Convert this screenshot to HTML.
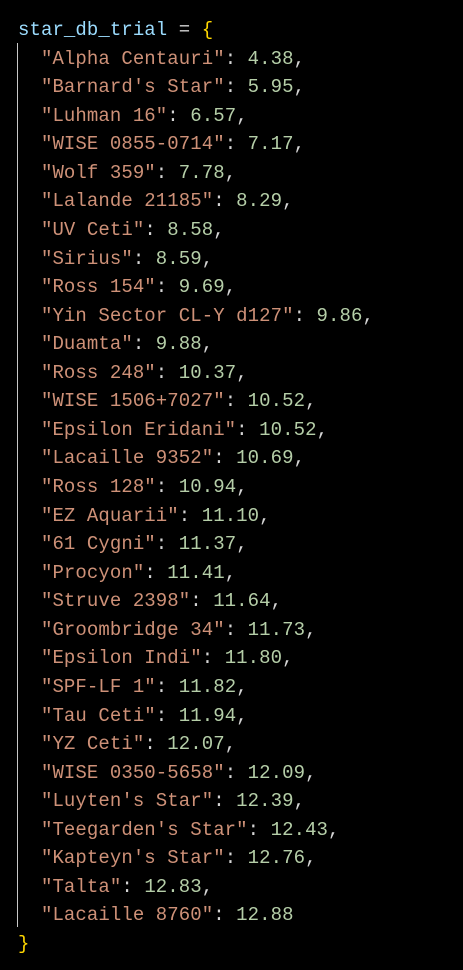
<!DOCTYPE html>
<html><head><style>
html,body{margin:0;padding:0;background:#000;width:463px;height:970px;overflow:hidden}
pre{margin:0;position:absolute;left:18px;top:16px;font-family:"Liberation Mono",monospace;font-size:19px;letter-spacing:0.08px;line-height:28.56px;color:#d4d4d4}
.v{color:#9cdcfe}.s{color:#ce9178}.n{color:#b5cea8}.b{color:#ffd700}
.g{position:absolute;left:17px;top:43px;width:1px;height:884px;background:#c8c8c8}
</style></head><body>
<div class="g"></div>
<pre><span class="v">star_db_trial</span> = <span class="b">{</span>
  <span class="s">"Alpha Centauri"</span>: <span class="n">4.38</span>,
  <span class="s">"Barnard's Star"</span>: <span class="n">5.95</span>,
  <span class="s">"Luhman 16"</span>: <span class="n">6.57</span>,
  <span class="s">"WISE 0855-0714"</span>: <span class="n">7.17</span>,
  <span class="s">"Wolf 359"</span>: <span class="n">7.78</span>,
  <span class="s">"Lalande 21185"</span>: <span class="n">8.29</span>,
  <span class="s">"UV Ceti"</span>: <span class="n">8.58</span>,
  <span class="s">"Sirius"</span>: <span class="n">8.59</span>,
  <span class="s">"Ross 154"</span>: <span class="n">9.69</span>,
  <span class="s">"Yin Sector CL-Y d127"</span>: <span class="n">9.86</span>,
  <span class="s">"Duamta"</span>: <span class="n">9.88</span>,
  <span class="s">"Ross 248"</span>: <span class="n">10.37</span>,
  <span class="s">"WISE 1506+7027"</span>: <span class="n">10.52</span>,
  <span class="s">"Epsilon Eridani"</span>: <span class="n">10.52</span>,
  <span class="s">"Lacaille 9352"</span>: <span class="n">10.69</span>,
  <span class="s">"Ross 128"</span>: <span class="n">10.94</span>,
  <span class="s">"EZ Aquarii"</span>: <span class="n">11.10</span>,
  <span class="s">"61 Cygni"</span>: <span class="n">11.37</span>,
  <span class="s">"Procyon"</span>: <span class="n">11.41</span>,
  <span class="s">"Struve 2398"</span>: <span class="n">11.64</span>,
  <span class="s">"Groombridge 34"</span>: <span class="n">11.73</span>,
  <span class="s">"Epsilon Indi"</span>: <span class="n">11.80</span>,
  <span class="s">"SPF-LF 1"</span>: <span class="n">11.82</span>,
  <span class="s">"Tau Ceti"</span>: <span class="n">11.94</span>,
  <span class="s">"YZ Ceti"</span>: <span class="n">12.07</span>,
  <span class="s">"WISE 0350-5658"</span>: <span class="n">12.09</span>,
  <span class="s">"Luyten's Star"</span>: <span class="n">12.39</span>,
  <span class="s">"Teegarden's Star"</span>: <span class="n">12.43</span>,
  <span class="s">"Kapteyn's Star"</span>: <span class="n">12.76</span>,
  <span class="s">"Talta"</span>: <span class="n">12.83</span>,
  <span class="s">"Lacaille 8760"</span>: <span class="n">12.88</span>
<span class="b">}</span></pre>
</body></html>
